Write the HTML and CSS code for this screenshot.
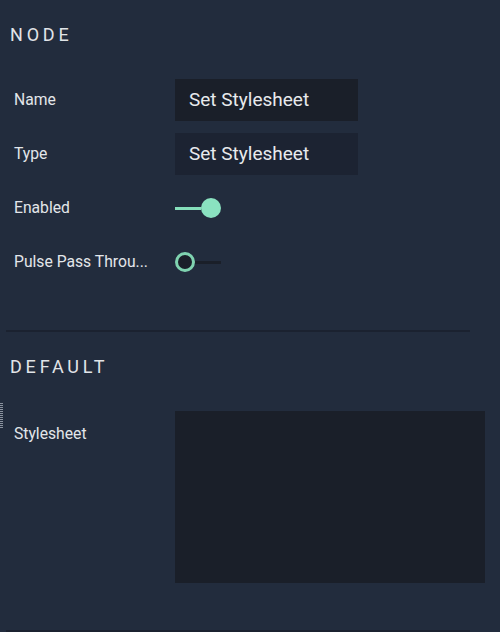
FILE: index.html
```html
<!DOCTYPE html>
<html>
<head>
<meta charset="utf-8">
<link rel="stylesheet" href="styles.css">
</head>
<body>
<div class="panel">
  <section class="section">
    <h2 class="heading">NODE</h2>
    <div class="rows">
      <div class="row">
        <span class="label">Name</span>
        <div class="field">Set Stylesheet</div>
      </div>
      <div class="row">
        <span class="label">Type</span>
        <div class="field field-readonly">Set Stylesheet</div>
      </div>
      <div class="row">
        <span class="label">Enabled</span>
        <div class="toggle toggle-on"><span class="track"></span><span class="thumb"></span></div>
      </div>
      <div class="row">
        <span class="label">Pulse Pass Throu...</span>
        <div class="toggle toggle-off"><span class="thumb"></span><span class="track"></span></div>
      </div>
    </div>
  </section>
  <section class="section">
    <h2 class="heading">DEFAULT</h2>
    <div class="rows">
      <div class="row row-top">
        <span class="label">Stylesheet</span>
        <div class="textarea"></div>
      </div>
    </div>
    <span class="grip"></span>
  </section>
</div>
</body>
</html>
```

FILE: styles.css
```css
html, body {
  margin: 0;
  padding: 0;
}
body {
  background: #222c3d;
  font-family: Roboto, "Liberation Sans", sans-serif;
  color: #e3e6ea;
  width: 500px;
  height: 632px;
  overflow: hidden;
}
.panel {
  display: flex;
  flex-direction: column;
}
.section {
  position: relative;
  padding: 24px 0 47px 4px;
  margin-left: 6px;
  margin-right: 30px;
  border-bottom: 2px solid #1b2230;
}
.heading {
  margin: 0;
  font-size: 18px;
  line-height: 22px;
  font-weight: 400;
  letter-spacing: 3.8px;
  color: #e1e4e8;
}
.rows {
  margin-top: 33px;
  display: flex;
  flex-direction: column;
  gap: 12px;
  padding-left: 4px;
}
.row {
  display: grid;
  grid-template-columns: 161px 1fr;
  align-items: center;
  min-height: 42px;
}
.row-top {
  align-items: start;
}
.row-top .label {
  padding-top: 14px;
}
.label {
  font-size: 15.7px;
  line-height: 18px;
  color: #e3e6ea;
  white-space: nowrap;
}
.field {
  width: 183px;
  height: 42px;
  box-sizing: border-box;
  padding-left: 14px;
  background: #1a1f29;
  font-size: 19px;
  line-height: 42px;
  color: #e8eaed;
}
.field-readonly {
  background: #1c2332;
}
.toggle {
  display: flex;
  align-items: center;
  width: 46px;
  height: 20px;
}
.track {
  flex: 1;
  height: 3px;
}
.thumb {
  width: 20px;
  height: 20px;
  border-radius: 50%;
  box-sizing: border-box;
}
.toggle-on .track {
  background: #86dfbb;
}
.toggle-on .thumb {
  background: #8ae2c0;
}
.toggle-off .track {
  background: #1a1f29;
}
.toggle-off .thumb {
  background: #1a1f29;
  border: 3px solid #7fd3b0;
}
.textarea {
  width: 310px;
  height: 172px;
  background: #1a1f29;
}
.grip {
  position: absolute;
  left: -6px;
  top: 71px;
  width: 3px;
  height: 25px;
  background: repeating-linear-gradient(to bottom, #8a929e 0, #8a929e 1px, transparent 1px, transparent 2px);
}
```
